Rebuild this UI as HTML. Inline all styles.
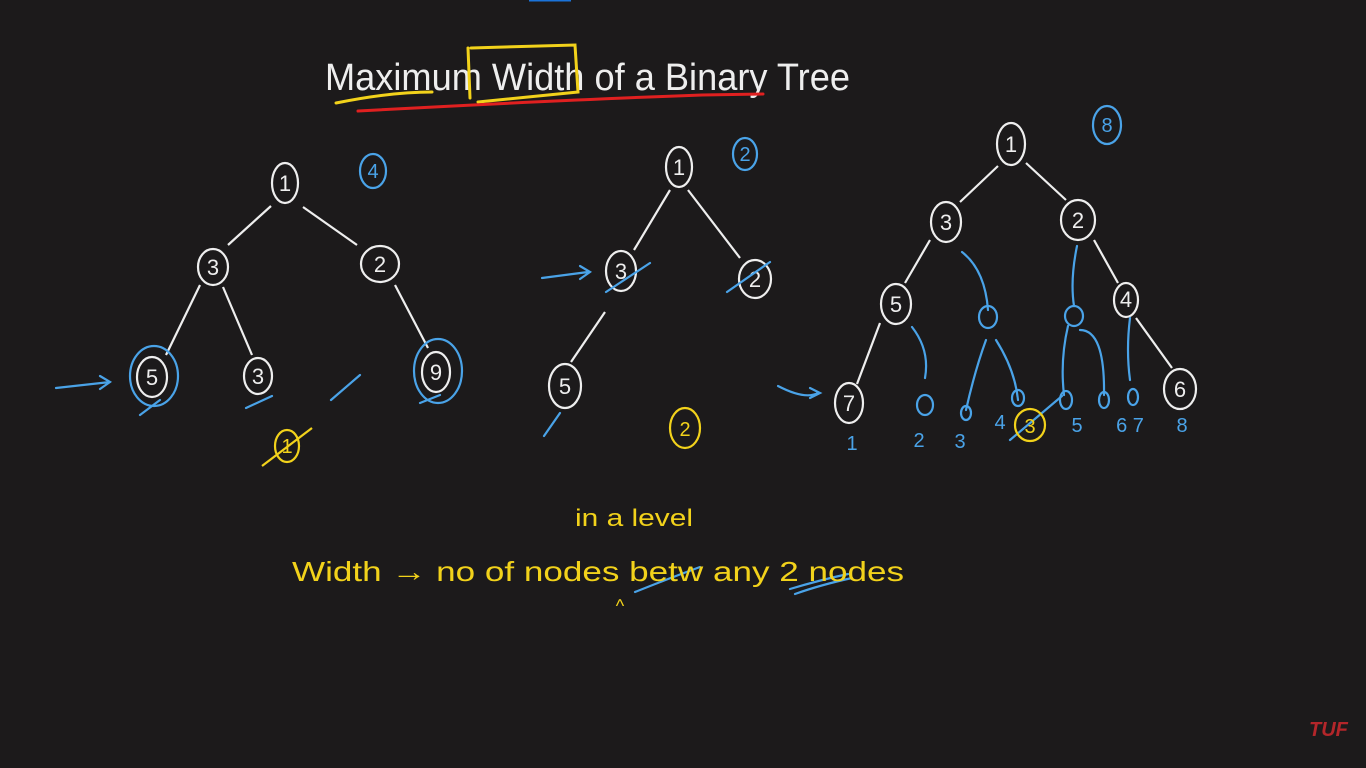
<!DOCTYPE html>
<html><head><meta charset="utf-8"><style>
html,body{margin:0;padding:0;background:#1c1a1b;width:1366px;height:768px;overflow:hidden}
svg{display:block}
text{font-family:"Liberation Sans",sans-serif}
</style></head><body>
<svg width="1366" height="768" viewBox="0 0 1366 768" xmlns="http://www.w3.org/2000/svg">
<rect width="1366" height="768" fill="#1c1a1b"/>
<rect x="529" y="0" width="42" height="1.5" fill="#1a73d9"/>
<g fill="none" stroke-linecap="round">
<!-- title -->
<text x="325" y="90" font-size="38" fill="#eee" stroke="none" font-family="Liberation Sans" textLength="525" lengthAdjust="spacingAndGlyphs">Maximum  Width  of  a  Binary  Tree</text>
<path d="M336 103 Q390 92 432 92" stroke="#f2d21b" stroke-width="3"/>
<path d="M471 48 L575 45 L578 92 L478 102" stroke="#f2d21b" stroke-width="3"/>
<path d="M468 48 L470 98" stroke="#f2d21b" stroke-width="3"/>
<path d="M358 111 Q560 100 702 95 L763 94" stroke="#e02020" stroke-width="3"/>
</g>
<!-- trees -->
<g fill="none" stroke="#eee" stroke-width="2.2" font-size="22">
<!-- tree 1 -->
<ellipse cx="285" cy="183" rx="13" ry="20"/>
<ellipse cx="213" cy="267" rx="15" ry="18"/>
<ellipse cx="380" cy="264" rx="19" ry="18"/>
<ellipse cx="152" cy="377" rx="15" ry="20"/>
<ellipse cx="258" cy="376" rx="14" ry="18"/>
<ellipse cx="436" cy="372" rx="14" ry="20"/>
<path d="M271 206 L228 245 M303 207 L357 245 M200 285 L166 355 M223 287 L252 355 M395 285 L428 348"/>
<!-- tree 2 -->
<ellipse cx="679" cy="167" rx="13" ry="20"/>
<ellipse cx="621" cy="271" rx="15" ry="20"/>
<ellipse cx="755" cy="279" rx="16" ry="19"/>
<ellipse cx="565" cy="386" rx="16" ry="22"/>
<path d="M670 190 L634 250 M688 190 L740 258 M605 312 L571 362"/>
<!-- tree 3 -->
<ellipse cx="1011" cy="144" rx="14" ry="21"/>
<ellipse cx="946" cy="222" rx="15" ry="20"/>
<ellipse cx="1078" cy="220" rx="17" ry="20"/>
<ellipse cx="896" cy="304" rx="15" ry="20"/>
<ellipse cx="1126" cy="300" rx="12" ry="17"/>
<ellipse cx="849" cy="403" rx="14" ry="20"/>
<ellipse cx="1180" cy="389" rx="16" ry="20"/>
<path d="M998 166 L960 202 M1026 163 L1066 200 M930 240 L905 283 M1094 240 L1118 283 M880 323 L857 384 M1136 318 L1172 368"/>
</g>
<g fill="#eee" font-size="22" text-anchor="middle">
<text x="285" y="191">1</text><text x="213" y="275">3</text><text x="380" y="272">2</text>
<text x="152" y="385">5</text><text x="258" y="384">3</text><text x="436" y="380">9</text>
<text x="679" y="175">1</text><text x="621" y="279">3</text><text x="755" y="287">2</text><text x="565" y="394">5</text>
<text x="1011" y="152">1</text><text x="946" y="230">3</text><text x="1078" y="228">2</text><text x="896" y="312">5</text>
<text x="1126" y="307">4</text><text x="849" y="411">7</text><text x="1180" y="397">6</text>
</g>
<!-- blue annotations -->
<g fill="none" stroke="#4aa3e8" stroke-width="2.2" stroke-linecap="round">
<ellipse cx="373" cy="171" rx="13" ry="17"/>
<ellipse cx="745" cy="154" rx="12" ry="16"/>
<ellipse cx="1107" cy="125" rx="14" ry="19"/>
<ellipse cx="154" cy="376" rx="24" ry="30"/>
<ellipse cx="438" cy="371" rx="24" ry="32"/>
<path d="M56 388 L110 382 M100 376 L110 382 L100 389"/>
<path d="M542 278 L588 272 M580 266 L590 272 L580 279"/>
<path d="M778 386 Q805 400 818 393 M810 388 L820 393 L810 398"/>
<path d="M140 415 L160 400 M246 408 L272 396 M331 400 L360 375 M420 403 L440 395 M544 436 L560 413"/>
<path d="M606 292 L650 263 M727 292 L770 262 M1010 440 L1062 396"/>
<path d="M962 252 Q985 270 988 310 M1077 246 Q1070 280 1074 306 M912 327 Q930 350 925 378 M986 340 Q975 370 966 410 M996 340 Q1015 370 1018 400 M1068 326 Q1060 360 1064 395 M1080 330 Q1105 330 1104 395 M1130 318 Q1126 350 1130 380"/>
<ellipse cx="988" cy="317" rx="9" ry="11"/><ellipse cx="1074" cy="316" rx="9" ry="10"/>
<ellipse cx="925" cy="405" rx="8" ry="10"/><ellipse cx="966" cy="413" rx="5" ry="7"/>
<ellipse cx="1018" cy="398" rx="6" ry="8"/><ellipse cx="1066" cy="400" rx="6" ry="9"/>
<ellipse cx="1104" cy="400" rx="5" ry="8"/><ellipse cx="1133" cy="397" rx="5" ry="8"/>
<path d="M790 589 Q820 580 848 574 M795 594 Q820 585 852 578 M635 592 Q670 578 700 567"/>
</g>
<g fill="#4aa3e8" font-size="20" text-anchor="middle">
<text x="373" y="178">4</text><text x="745" y="161">2</text><text x="1107" y="132">8</text>
<text x="852" y="450">1</text><text x="919" y="447">2</text><text x="960" y="448">3</text><text x="1000" y="429">4</text>
<text x="1077" y="432">5</text><text x="1130" y="432">6 7</text><text x="1182" y="432">8</text>
</g>
<!-- yellow -->
<g fill="none" stroke="#f2d21b" stroke-width="2.2">
<ellipse cx="287" cy="446" rx="12" ry="16"/>
<path d="M262 466 L312 428"/>
<ellipse cx="685" cy="428" rx="15" ry="20"/>
<ellipse cx="1030" cy="425" rx="15" ry="16"/>
</g>
<g fill="#f2d21b" font-size="20" text-anchor="middle">
<text x="287" y="453">1</text><text x="685" y="436">2</text><text x="1030" y="433">3</text>
<text x="620" y="612" font-size="18">^</text>
</g>
<text x="575" y="526" font-size="24" fill="#f2d21b" textLength="118" lengthAdjust="spacingAndGlyphs">in a level</text>
<text x="292" y="581" font-size="28" fill="#f2d21b" textLength="612" lengthAdjust="spacingAndGlyphs">Width → no of nodes  betw  any 2 nodes</text>
<text x="1309" y="736" font-size="20" font-weight="bold" font-style="italic" fill="#b3262a">TUF</text>
</svg>
</body></html>
